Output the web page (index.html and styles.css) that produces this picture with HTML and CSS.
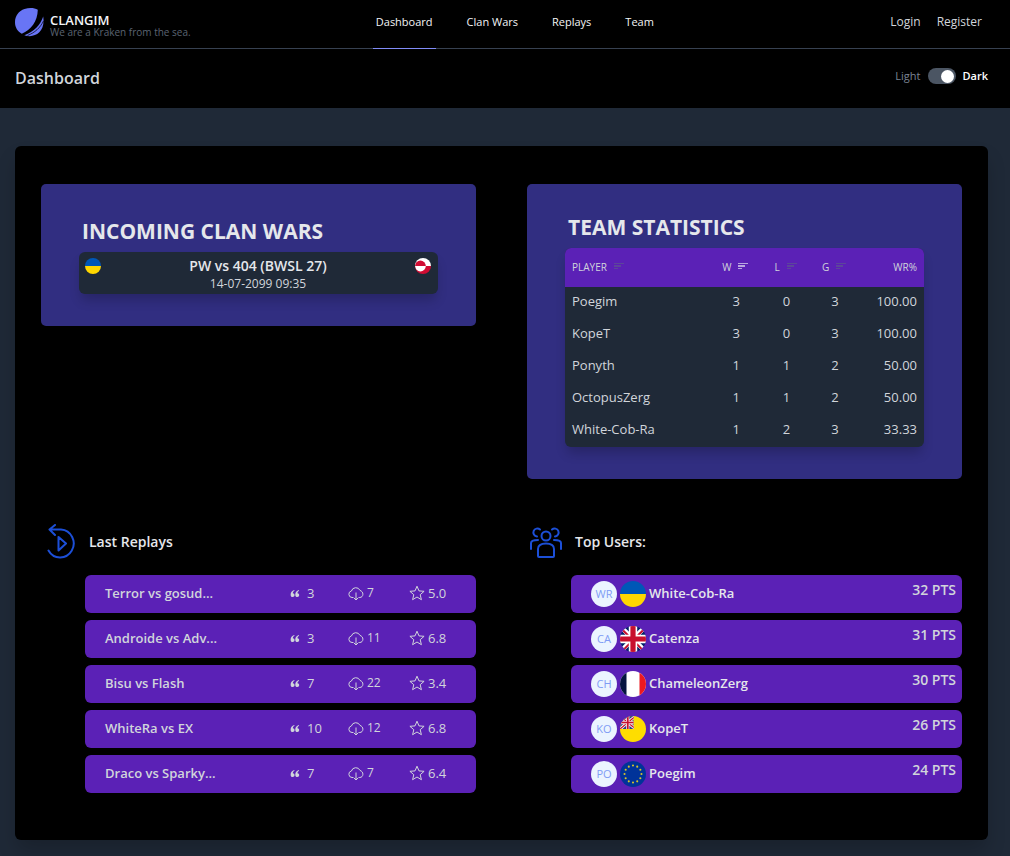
FILE: index.html
```html
<!DOCTYPE html>
<html lang="en">
<head>
<meta charset="utf-8">
<meta name="viewport" content="width=device-width, initial-scale=1">
<title>CLANGIM - Dashboard</title>
<link rel="stylesheet" href="styles.css">
</head>
<body>
<svg class="sprite" aria-hidden="true">
  <defs>
    <clipPath id="round"><circle cx="20" cy="20" r="20"/></clipPath>
    <clipPath id="canton"><rect width="21" height="20"/></clipPath>
  </defs>
  <symbol id="flag-ua" viewBox="0 0 40 40"><g clip-path="url(#round)"><path fill="#0057b7" d="M0 0h40v20H0z"/><path fill="#ffd700" d="M0 20h40v20H0z"/></g></symbol>
  <symbol id="flag-gl" viewBox="0 0 40 40"><g clip-path="url(#round)"><path fill="#fff" d="M0 0h40v20H0z"/><path fill="#d00c33" d="M0 20h40v20H0z"/><path fill="#d00c33" d="M0 20a13.500 13.500 0 0 1 27 0z"/><path fill="#fff" d="M0 20a13.500 13.500 0 0 0 27 0z"/></g></symbol>
  <symbol id="flag-gb" viewBox="0 0 40 40"><g clip-path="url(#round)"><path fill="#012169" d="M0 0h40v40H0z"/><path stroke="#fff" stroke-width="7" d="M-2-2l44 44M42-2L-2 42"/><path stroke="#c8102e" stroke-width="3" d="M-2 0l22 22M42 0L20 22M-2 44l22-22M42 44L20 22"/><path stroke="#fff" stroke-width="13" d="M20 0v40M0 20h40"/><path stroke="#c8102e" stroke-width="8" d="M20 0v40M0 20h40"/></g></symbol>
  <symbol id="flag-fr" viewBox="0 0 40 40"><g clip-path="url(#round)"><path fill="#fff" d="M0 0h40v40H0z"/><path fill="#051440" d="M0 0h10v40H0z"/><path fill="#ec1920" d="M30 0h10v40H30z"/></g></symbol>
  <symbol id="flag-nu" viewBox="0 0 40 40"><g clip-path="url(#round)"><path fill="#fedd00" d="M0 0h40v40H0z"/><g clip-path="url(#canton)"><path fill="#2a3f7d" d="M0 0h21v20H0z"/><path stroke="#fff" stroke-width="4.500" d="M0 0l24 20M0 20L24 0"/><path stroke="#c8102e" stroke-width="2" d="M0 0l24 20M0 20L24 0"/><path stroke="#f3dfe3" stroke-width="5" d="M12 0v20M0 10h21"/><path stroke="#c8102e" stroke-width="2.500" d="M12 0v20M0 10h21"/></g></g></symbol>
  <symbol id="flag-eu" viewBox="0 0 40 40"><circle cx="20" cy="20" r="20" fill="#039"/><g fill="#d8c52a"><circle cx="20" cy="7" r="1.600"/><circle cx="26.500" cy="8.700" r="1.600"/><circle cx="31.300" cy="13.500" r="1.600"/><circle cx="33" cy="20" r="1.600"/><circle cx="31.300" cy="26.500" r="1.600"/><circle cx="26.500" cy="31.300" r="1.600"/><circle cx="20" cy="33" r="1.600"/><circle cx="13.500" cy="31.300" r="1.600"/><circle cx="8.700" cy="26.500" r="1.600"/><circle cx="7" cy="20" r="1.600"/><circle cx="8.700" cy="13.500" r="1.600"/><circle cx="13.500" cy="8.700" r="1.600"/></g></symbol>
  <symbol id="icon-sort" viewBox="0 0 10 7"><path fill="currentColor" d="M0 0h10v1H0zM0 2h7v2H0zM0 5h4v1H0z"/></symbol>
  <symbol id="icon-quote" viewBox="0 0 10 8"><path fill="currentColor" d="M4.200 0C1.500.8 0 2.700 0 5.300 0 7 .9 8 2.300 8s2.200-.9 2.200-2.200S3.700 3.700 2.500 3.600C2.600 2.300 3.200 1.400 4.400.8zM9.500 0C6.800.8 5.300 2.700 5.300 5.300 5.300 7 6.200 8 7.600 8s2.200-.9 2.200-2.200S9 3.700 7.800 3.600C7.900 2.300 8.500 1.400 9.700.8z"/></symbol>
  <symbol id="icon-cloud" viewBox="0 0 16 14"><path fill="none" stroke="currentColor" d="M5.500 10.500H4a3.300 3.300 0 0 1-.6-6.500A4.600 4.600 0 0 1 12 3.400c1.800.7 2.900 2 2.900 3.800 0 2-1.300 3.200-3.100 3.300h-1.300M8 5.500v7.300M6 11l2 2 2-2"/></symbol>
  <symbol id="icon-star" viewBox="0 0 16 16"><path fill="none" stroke="currentColor" stroke-linejoin="round" d="M8 1.200l2 4.700 5.100.4-3.900 3.400 1.200 5L8 12l-4.400 2.700 1.200-5L.9 6.300 6 5.900z"/></symbol>
</svg>

<header class="topbar">
  <a class="brand" href="#">
    <svg class="brand-logo" viewBox="0 0 30 29" aria-hidden="true"><path fill="#6875f5" d="M22.800 1.800C19.300-.3 14.300-.6 9.500 1.100 3.800 3 0 8 0 14.200c0 5.300 2.700 9.200 6.800 11.500C16 22 22.500 13.500 22.800 1.800zM28.200 8.500C25.500 17 19 24 9.300 27.200c9.700 3.500 21.500-2.500 18.900-18.700z"/><path fill="none" stroke="#000" stroke-width=".7" d="M28.500 13C25 20 20 24.500 12.500 27.500"/></svg>
    <span class="brand-text"><strong class="brand-name">CLANGIM</strong><small class="brand-tag">We are a Kraken from the sea.</small></span>
  </a>
  <nav class="nav" aria-label="Main">
    <a class="nav-link active" href="#">Dashboard</a>
    <a class="nav-link" href="#">Clan Wars</a>
    <a class="nav-link" href="#">Replays</a>
    <a class="nav-link" href="#">Team</a>
  </nav>
  <nav class="auth" aria-label="Account"><a href="#">Login</a><a href="#">Register</a></nav>
</header>

<div class="subbar">
  <h1 class="page-title">Dashboard</h1>
  <label class="theme"><span class="theme-off">Light</span><input class="switch" type="checkbox" role="switch" checked><span>Dark</span></label>
</div>

<main class="board">
  <section class="panel">
    <h2 class="panel-title wars-title">INCOMING CLAN WARS</h2>
    <a class="war" href="#">
      <svg class="war-flag"><use href="#flag-ua"/></svg>
      <span class="war-text"><strong class="war-name">PW vs 404 (BWSL 27)</strong><time class="war-time">14-07-2099 09:35</time></span>
      <svg class="war-flag"><use href="#flag-gl"/></svg>
    </a>
  </section>

  <section class="panel">
    <h2 class="panel-title">TEAM STATISTICS</h2>
    <table class="stats">
      <colgroup><col class="col-player"><col class="col-num"><col class="col-num"><col class="col-games"><col></colgroup>
      <thead>
        <tr>
          <th><button class="sort">PLAYER<svg><use href="#icon-sort"/></svg></button></th>
          <th><button class="sort sorted">W<svg><use href="#icon-sort"/></svg></button></th>
          <th><button class="sort">L<svg><use href="#icon-sort"/></svg></button></th>
          <th><button class="sort">G<svg><use href="#icon-sort"/></svg></button></th>
          <th>WR%</th>
        </tr>
      </thead>
      <tbody>
        <tr><td>Poegim</td><td>3</td><td>0</td><td>3</td><td>100.00</td></tr>
        <tr><td>KopeT</td><td>3</td><td>0</td><td>3</td><td>100.00</td></tr>
        <tr><td>Ponyth</td><td>1</td><td>1</td><td>2</td><td>50.00</td></tr>
        <tr><td>OctopusZerg</td><td>1</td><td>1</td><td>2</td><td>50.00</td></tr>
        <tr><td>White-Cob-Ra</td><td>1</td><td>2</td><td>3</td><td>33.33</td></tr>
      </tbody>
    </table>
  </section>

  <section class="feed">
    <svg class="feed-icon" viewBox="0 0 34 36" fill="none" stroke="#1c4fd7" stroke-width="2" stroke-linecap="round" stroke-linejoin="round" aria-hidden="true"><path d="M12 1L6.500 5.500 12 11M7 5.500h11a13.500 14 0 1 1-12.500 21M15.500 13v13.500l7.500-7z"/></svg>
    <h2 class="feed-title">Last Replays</h2>
    <ul class="rows">
      <li class="row replay"><a href="#">Terror vs gosud...</a><span class="meta quotes"><svg><use href="#icon-quote"/></svg>3</span><span class="meta loads"><svg><use href="#icon-cloud"/></svg>7</span><span class="meta stars"><svg><use href="#icon-star"/></svg>5.0</span></li>
      <li class="row replay"><a href="#">Androide vs Adv...</a><span class="meta quotes"><svg><use href="#icon-quote"/></svg>3</span><span class="meta loads"><svg><use href="#icon-cloud"/></svg>11</span><span class="meta stars"><svg><use href="#icon-star"/></svg>6.8</span></li>
      <li class="row replay"><a href="#">Bisu vs Flash</a><span class="meta quotes"><svg><use href="#icon-quote"/></svg>7</span><span class="meta loads"><svg><use href="#icon-cloud"/></svg>22</span><span class="meta stars"><svg><use href="#icon-star"/></svg>3.4</span></li>
      <li class="row replay"><a href="#">WhiteRa vs EX</a><span class="meta quotes"><svg><use href="#icon-quote"/></svg>10</span><span class="meta loads"><svg><use href="#icon-cloud"/></svg>12</span><span class="meta stars"><svg><use href="#icon-star"/></svg>6.8</span></li>
      <li class="row replay"><a href="#">Draco vs Sparky...</a><span class="meta quotes"><svg><use href="#icon-quote"/></svg>7</span><span class="meta loads"><svg><use href="#icon-cloud"/></svg>7</span><span class="meta stars"><svg><use href="#icon-star"/></svg>6.4</span></li>
    </ul>
  </section>

  <section class="feed">
    <svg class="feed-icon" viewBox="0 0 34 36" fill="none" stroke="#1c4fd7" stroke-width="2" stroke-linecap="round" stroke-linejoin="round" aria-hidden="true"><circle cx="17" cy="12" r="4.500"/><path d="M9 32V25q0-5.500 8-5.500t8 5.500v7q0 1-1 1H10q-1 0-1-1zM8 12.500a4 4 0 1 1 3-7M26 12.500a4 4 0 1 0-3-7M2 25v-6q0-3 7-3M32 25v-6q0-3-7-3"/></svg>
    <h2 class="feed-title">Top Users:</h2>
    <ol class="rows">
      <li class="row user"><span class="avatar">WR</span><svg class="flag"><use href="#flag-ua"/></svg><a href="#">White-Cob-Ra</a><span class="points">32 PTS</span></li>
      <li class="row user"><span class="avatar">CA</span><svg class="flag"><use href="#flag-gb"/></svg><a href="#">Catenza</a><span class="points">31 PTS</span></li>
      <li class="row user"><span class="avatar">CH</span><svg class="flag"><use href="#flag-fr"/></svg><a href="#">ChameleonZerg</a><span class="points">30 PTS</span></li>
      <li class="row user"><span class="avatar">KO</span><svg class="flag"><use href="#flag-nu"/></svg><a href="#">KopeT</a><span class="points">26 PTS</span></li>
      <li class="row user"><span class="avatar">PO</span><svg class="flag"><use href="#flag-eu"/></svg><a href="#">Poegim</a><span class="points">24 PTS</span></li>
    </ol>
  </section>
</main>
</body>
</html>
```

FILE: styles.css
```css
* { box-sizing: border-box; }

body {
  margin: 0;
  min-height: 100vh;
  background: #1f2937;
  color: #e5e7eb;
  font: 13px/20px "Open Sans", "Noto Sans", sans-serif;
}

h1, h2, ul, ol { margin: 0; padding: 0; }
ul, ol { list-style: none; }
a { color: inherit; text-decoration: none; }
svg { display: block; flex: none; }
.sprite { position: absolute; width: 0; height: 0; }

.topbar {
  display: grid;
  grid-template-columns: minmax(200px, 37%) auto 1fr;
  min-height: 49px;
  padding: 0 28px 0 15px;
  background: #000;
  border-bottom: 1px solid #374151;
  font-size: 11px;
}
.brand { display: flex; align-items: center; gap: 5px; padding-bottom: 4px; }
.brand-logo { width: 30px; height: 29px; }
.brand-text { display: flex; flex-direction: column; padding-top: 6px; }
.brand-name { font-size: 13px; line-height: 14px; font-weight: 600; color: #f3f4f6; }
.brand-tag { font-size: 10px; line-height: 10px; font-weight: 400; color: #5b6472; }
.nav { display: flex; gap: 28px; margin-bottom: -1px; color: #f3f4f6; }
.nav-link { padding: 12px 3px 15px; border-bottom: 1px solid transparent; }
.nav-link.active { border-color: #818cf8; }
.auth { display: flex; justify-content: flex-end; gap: 16px; padding-top: 12px; color: #d1d5db; font-size: 12px; }

.subbar {
  display: flex;
  justify-content: space-between;
  align-items: center;
  min-height: 59px;
  padding: 0 22px 2px 15px;
  background: #000;
}
.page-title { font-size: 16px; font-weight: 600; color: #d1d5db; }
.theme { display: flex; align-items: center; gap: 7px; padding-bottom: 4px; font-size: 11px; font-weight: 600; color: #fff; }
.theme-off { font-weight: 400; color: #7b8494; }
.switch {
  appearance: none;
  width: 28px;
  height: 16px;
  margin: 0;
  padding: 2px;
  border-radius: 8px;
  background: #4b5563;
}
.switch::before { content: ""; display: block; width: 13px; height: 13px; border-radius: 50%; background: #fff; }
.switch:checked::before { margin-left: auto; }

.board {
  display: grid;
  grid-template-columns: 1fr 1fr;
  align-items: start;
  gap: 45px 51px;
  margin: 38px 22px 16px 15px;
  padding: 38px 26px 47px;
  border-radius: 6px;
  background: #000;
  box-shadow: 0 12px 20px -2px #0003;
}

.panel { padding: 32px 38px; border-radius: 5px; background: #312e81; }
.panel-title { padding: 0 3px 10px; font-size: 21px; line-height: 22px; font-weight: 700; }
.wars-title { padding-top: 4px; }

.war {
  display: flex;
  justify-content: space-between;
  padding: 5px 7px 1px 6px;
  border-radius: 6px;
  background: #1f2937;
  box-shadow: 0 8px 12px -2px #0003;
}
.war-flag { width: 16px; height: 16px; margin-top: 1px; }
.war-text { display: flex; flex-direction: column; text-align: center; line-height: 18px; }
.war-name { font-size: 14px; font-weight: 600; }
.war-time { font-size: 12px; color: #d1d5db; }

.stats {
  width: 100%;
  table-layout: fixed;
  border-spacing: 0;
  border-radius: 6px;
  overflow: hidden;
  background: #1f2937;
  box-shadow: 0 8px 12px -2px #0003;
  color: #d1d5db;
}
.col-player { width: 41%; }
.col-num { width: 14%; }
.col-games { width: 13%; }
.stats th { height: 39px; padding: 0 4px 2px 0; background: #5b21b6; font-size: 10px; font-weight: 400; }
.stats td { height: 32px; padding: 0 2px 4px 0; text-align: center; }
.stats th:first-child, .stats td:first-child { padding-left: 7px; text-align: left; }
.stats th:last-child, .stats td:last-child { padding-right: 7px; text-align: right; }
.sort { display: inline-flex; align-items: center; gap: 7px; padding: 0; border: 0; background: none; color: inherit; font: inherit; }
.sort svg { width: 10px; height: 7px; color: #5d459b; }
.sort.sorted svg { color: #b9a6df; }

.feed { display: grid; grid-template-columns: 34px 1fr; column-gap: 14px; row-gap: 15px; align-items: center; padding-left: 2px; }
.feed-icon { width: 34px; height: 36px; }
.feed-title { font-size: 14px; font-weight: 600; margin-left: -2px; }
.rows { grid-column: 1 / -1; display: grid; gap: 7px; padding-left: 42px; }
.row { height: 38px; border-radius: 6px; background: #5b21b6; color: #d1d5db; font-weight: 600; }
.replay { display: grid; grid-template-columns: 185fr 58fr 61fr 67fr; align-items: center; padding: 0 0 3px 20px; white-space: nowrap; }
.meta { display: flex; align-items: center; font-weight: 400; }
.quotes { gap: 7px; }
.quotes svg { width: 10px; height: 7px; margin-top: 2px; }
.loads { gap: 3px; font-size: 12px; }
.loads svg { width: 16px; height: 14px; margin-top: 3px; }
.stars { gap: 3px; }
.stars svg { width: 16px; height: 16px; }

.user { display: flex; align-items: center; gap: 3px; padding: 0 6px 0 20px; color: #e5e7eb; }
.avatar { width: 26px; height: 26px; border-radius: 50%; background: #ebf4ff; color: #7f9cf5; font-size: 11px; line-height: 26px; font-weight: 400; text-align: center; }
.flag { width: 26px; height: 26px; }
.user a { padding-bottom: 3px; }
.points { margin-left: auto; padding-bottom: 9px; color: #d1d5db; font-size: 14px; }
```
